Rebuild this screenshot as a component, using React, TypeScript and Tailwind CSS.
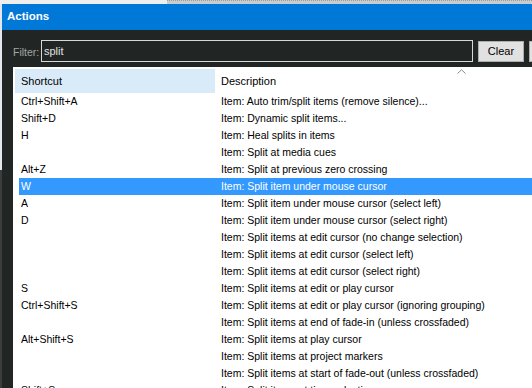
import React from "react";

const rows: [string, string][] = [
  ["Ctrl+Shift+A", "Item: Auto trim/split items (remove silence)..."],
  ["Shift+D", "Item: Dynamic split items..."],
  ["H", "Item: Heal splits in items"],
  ["", "Item: Split at media cues"],
  ["Alt+Z", "Item: Split at previous zero crossing"],
  ["W", "Item: Split item under mouse cursor"],
  ["A", "Item: Split item under mouse cursor (select left)"],
  ["D", "Item: Split item under mouse cursor (select right)"],
  ["", "Item: Split items at edit cursor (no change selection)"],
  ["", "Item: Split items at edit cursor (select left)"],
  ["", "Item: Split items at edit cursor (select right)"],
  ["S", "Item: Split items at edit or play cursor"],
  ["Ctrl+Shift+S", "Item: Split items at edit or play cursor (ignoring grouping)"],
  ["", "Item: Split items at end of fade-in (unless crossfaded)"],
  ["Alt+Shift+S", "Item: Split items at play cursor"],
  ["", "Item: Split items at project markers"],
  ["", "Item: Split items at start of fade-out (unless crossfaded)"],
  ["Shift+S", "Item: Split items at time selection"],
];

export default function App() {
  return (
    <div
      className="w-[532px] h-[388px] overflow-hidden flex flex-col bg-[#212624] text-[10.5px] leading-none"
      style={{ fontFamily: '"Liberation Sans", Arial, sans-serif' }}
    >
      <div className="h-[4px] flex shrink-0">
        <div className="w-[167px] bg-[#eeeeee]" />
        <div className="flex-1 bg-[#c9cccc] border-t border-dotted border-[#9aa0a0]" />
      </div>
      <div className="flex flex-1 min-h-0">
        <div className="w-[2px] flex flex-col shrink-0">
          <div className="h-[166px] bg-[#e4e8ee]" />
          <div className="flex-1 bg-[#3a3d3c]" />
        </div>
        <div className="flex-1 flex flex-col min-w-0">
          <div className="h-[26px] bg-[#0078d7] flex items-center pl-[5px] shrink-0">
            <span className="text-white font-bold text-[11.5px]">Actions</span>
          </div>
          <div className="flex-1 flex flex-col min-h-0 pt-[10px]">
            <div className="flex h-[22px] items-center shrink-0">
              <span className="ml-[11px] w-[28px] shrink-0 text-[#a3a6a5] text-[10.5px] pt-[2px]">Filter:</span>
              <div className="w-[432px] shrink-0 h-[22px] border border-[#d8d8d8] bg-[#212624] flex items-center pl-[2px] text-[#e0e0e0] text-[11px]">
                split
              </div>
              <button className="ml-[5px] shrink-0 w-[46px] h-[21px] mt-[1px] bg-[#e1e1e1] border border-[#adadad] text-black text-[11px] flex items-center justify-center">
                Clear
              </button>
              <button className="ml-[5px] w-[40px] h-[21px] mt-[1px] bg-[#e1e1e1] border border-[#adadad] shrink-0" />
            </div>
            <div className="mt-[5px] ml-[11px] flex-1 bg-white flex flex-col min-h-0 overflow-hidden relative">
              <div className="flex h-[24px] mt-[2px] ml-[2px] shrink-0 items-center text-[11px]">
                <div className="w-[200px] h-full bg-[#d9eaf8] flex items-center pl-[6px] text-black">Shortcut</div>
                <div className="pl-[6px] text-black">Description</div>
              </div>
              <svg className="absolute left-[444px] top-[2px]" width="9" height="5" viewBox="0 0 9 5">
                <path d="M0.5 4.5 L4.5 0.8 L8.5 4.5" fill="none" stroke="#8a8a8a" strokeWidth="1" />
              </svg>
              <div className="flex flex-col ml-[6px]">
                {rows.map(([k, d], i) => {
                  const sel = i === 5;
                  return (
                    <div
                      key={i}
                      className={
                        sel
                          ? "flex h-[17px] items-center bg-[#3399ff] text-white"
                          : "flex h-[17px] items-center text-black"
                      }
                    >
                      <div className="w-[202px] pl-[2px] shrink-0 whitespace-nowrap">{k}</div>
                      <div className="whitespace-nowrap">{d}</div>
                    </div>
                  );
                })}
              </div>
            </div>
          </div>
        </div>
      </div>
    </div>
  );
}
